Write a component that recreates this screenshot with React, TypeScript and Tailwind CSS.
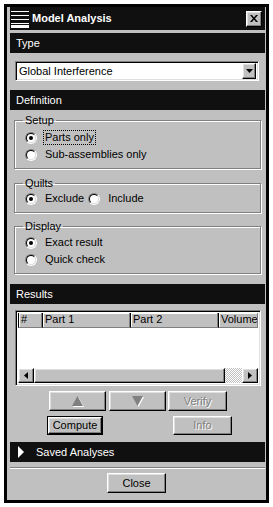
import React from "react";

const raised =
  "border border-t-white border-l-white border-r-black border-b-black shadow-[inset_-1px_-1px_0_#808080,inset_1px_1px_0_#dfdfdf] bg-[#c0c0c0]";
const sunken =
  "border border-t-[#808080] border-l-[#808080] border-r-white border-b-white shadow-[inset_1px_1px_0_#000,inset_-1px_-1px_0_#dfdfdf]";

function Bar({ children, className = "" }: { children: React.ReactNode; className?: string }) {
  return (
    <div className={"h-[20px] bg-[#101010] text-white text-[11px] flex items-center pl-[6px] " + className}>
      {children}
    </div>
  );
}

function Radio({ checked }: { checked?: boolean }) {
  return (
    <span className="flex w-[12px] h-[12px] shrink-0 rounded-full border border-t-[#808080] border-l-[#808080] border-r-white border-b-white">
      <span className="flex flex-1 items-center justify-center rounded-full border border-t-black border-l-black border-r-[#dfdfdf] border-b-[#dfdfdf] bg-white">
        {checked && <span className="w-[4px] h-[4px] rounded-full bg-black" />}
      </span>
    </span>
  );
}

function RadioRow({ label, checked, focused }: { label: string; checked?: boolean; focused?: boolean }) {
  return (
    <div className="flex items-center h-[17px] ml-[5px] gap-[6px]">
      <Radio checked={checked} />
      <span
        className={
          "px-[1px] leading-[13px] border " + (focused ? "border-dotted border-black" : "border-transparent")
        }
      >
        {label}
      </span>
    </div>
  );
}

function Group({ label, children, className = "" }: { label: string; children: React.ReactNode; className?: string }) {
  return (
    <fieldset
      className={
        "ml-[4px] w-[247px] border border-[#808080] shadow-[inset_1px_1px_0_#fff,1px_1px_0_#fff] pl-[5px] text-[11px] " +
        className
      }
    >
      <legend className="ml-[3px] px-[2px] leading-[12px]">{label}</legend>
      {children}
    </fieldset>
  );
}

function Tri({ dir, disabled }: { dir: "up" | "down"; disabled?: boolean }) {
  const pts = dir === "up" ? "5.5,0 11,10 0,10" : "0,0 11,0 5.5,10";
  return (
    <svg width="12" height="11" viewBox="0 0 12 11">
      <polygon points={pts} transform="translate(1,1)" fill="#fff" />
      <polygon points={pts} fill={disabled ? "#808080" : "#000"} />
    </svg>
  );
}

export default function App() {
  return (
    <div className="w-[273px] h-[507px] bg-white pt-[4px] pl-[4px] font-['Liberation_Sans',Arial,sans-serif] text-black">
      <div className="w-[265px] h-[499px] border-[3px] border-black bg-[#c0c0c0] flex flex-col pl-[3px] pr-[1px]">
        {/* Title bar */}
        <div className="h-[23px] bg-[#101010] flex items-center text-white">
          <svg width="18" height="18" viewBox="0 0 18 18" className="ml-[1px]">
            <rect x="0" y="1" width="18" height="1" fill="#fff" />
            <rect x="0" y="5" width="18" height="1" fill="#fff" />
            <rect x="0" y="9" width="18" height="1" fill="#fff" />
            <rect x="0" y="13" width="18" height="1" fill="#fff" />
            <rect x="0" y="15" width="18" height="3" fill="#fff" />
          </svg>
          <span className="ml-[3px] text-[11px] font-bold">Model Analysis</span>
          <div className={"ml-auto mr-[3px] w-[16px] h-[16px] flex items-center justify-center " + raised}>
            <svg width="8" height="7" viewBox="0 0 8 7">
              <path d="M0 0h2l2 2.5L6 0h2L5 3.5 8 7H6L4 4.5 2 7H0l3-3.5z" fill="#000" />
            </svg>
          </div>
        </div>

        {/* Type */}
        <Bar className="mt-[3px]">Type</Bar>
        <div className={"mt-[8px] ml-[5px] w-[244px] h-[20px] bg-white flex items-center pl-[3px] pr-[2px] " + sunken}>
          <span className="text-[11px]">Global Interference</span>
          <div className={"ml-auto w-[14px] h-[16px] flex items-center justify-center " + raised}>
            <svg width="7" height="4" viewBox="0 0 7 4">
              <polygon points="0,0 7,0 3.5,4" fill="#000" />
            </svg>
          </div>
        </div>

        {/* Definition */}
        <Bar className="mt-[9px]">Definition</Bar>
        <Group label="Setup" className="mt-[4px] pt-[3px] pb-[5px]">
          <RadioRow label="Parts only" checked focused />
          <RadioRow label="Sub-assemblies only" />
        </Group>
        <Group label="Quilts" className="mt-[8px] pt-[1px] pb-[5px]">
          <div className="flex items-center h-[17px] ml-[5px]">
            <Radio checked />
            <span className="ml-[8px]">Exclude</span>
            <span className="ml-[4px]">
              <Radio />
            </span>
            <span className="ml-[8px]">Include</span>
          </div>
        </Group>
        <Group label="Display" className="mt-[7px] pt-[2px] pb-[5px]">
          <RadioRow label="Exact result" checked />
          <RadioRow label="Quick check" />
        </Group>

        {/* Results */}
        <Bar className="mt-[10px]">Results</Bar>
        <div className={"mt-[6px] ml-[5px] w-[246px] h-[76px] bg-white flex flex-col p-[2px] " + sunken}>
          <div className="flex h-[15px] text-[11px] leading-[13px]">
            {[
              ["#", "w-[24px]"],
              ["Part 1", "w-[88px]"],
              ["Part 2", "w-[88px]"],
              ["Volume", "flex-1"],
            ].map(([t, w]) => (
              <div
                key={t}
                className={
                  w +
                  " bg-[#c0c0c0] pl-[2px] border-r border-b border-r-[#808080] border-b-[#808080] shadow-[inset_1px_1px_0_#fff] border-l border-l-black overflow-hidden whitespace-nowrap"
                }
              >
                {t}
              </div>
            ))}
          </div>
          <div className="flex-1 bg-white" />
          <div className="flex h-[15px]">
            <div className={"w-[16px] h-[15px] flex items-center justify-center " + raised}>
              <svg width="4" height="7" viewBox="0 0 4 7">
                <polygon points="4,0 4,7 0,3.5" fill="#000" />
              </svg>
            </div>
            <div className={"w-[191px] h-[15px] " + raised} />
            <div className="flex-1 h-[15px] bg-[repeating-conic-gradient(#ffffff_0%_25%,#c0c0c0_0%_50%)] bg-size-[2px_2px]" />
            <div className={"w-[16px] h-[15px] flex items-center justify-center " + raised}>
              <svg width="4" height="7" viewBox="0 0 4 7">
                <polygon points="0,0 4,3.5 0,7" fill="#000" />
              </svg>
            </div>
          </div>
        </div>

        {/* Buttons */}
        <div className="mt-[5px] flex h-[20px] text-[11px]">
          <div className={"ml-[39px] w-[57px] flex items-center justify-center " + raised}>
            <Tri dir="up" disabled />
          </div>
          <div className={"ml-[3px] w-[57px] flex items-center justify-center " + raised}>
            <Tri dir="down" disabled />
          </div>
          <div
            className={
              "ml-[2px] w-[59px] flex items-center justify-center text-[#808080] [text-shadow:1px_1px_0_#fff] " + raised
            }
          >
            Verify
          </div>
        </div>
        <div className="mt-[5px] flex h-[19px] text-[11px]">
          <div className="ml-[37px] w-[56px] border border-black flex">
            <div className={"flex-1 flex items-center justify-center " + raised}>Compute</div>
          </div>
          <div
            className={
              "ml-[70px] w-[59px] flex items-center justify-center text-[#808080] [text-shadow:1px_1px_0_#fff] " + raised
            }
          >
            Info
          </div>
        </div>

        {/* Saved analyses */}
        <Bar className="mt-[7px] pl-[8px]">
          <svg width="6" height="12" viewBox="0 0 6 12">
            <polygon points="0,0 6,6 0,12" fill="#fff" />
          </svg>
          <span className="ml-[12px]">Saved Analyses</span>
        </Bar>
        <div className="mt-[5px] h-[2px] border-t border-t-[#808080] border-b border-b-white" />
        <div className="mt-[4px] flex h-[20px] text-[11px]">
          <div className={"ml-[97px] w-[59px] flex items-center justify-center " + raised}>Close</div>
        </div>
      </div>
    </div>
  );
}
